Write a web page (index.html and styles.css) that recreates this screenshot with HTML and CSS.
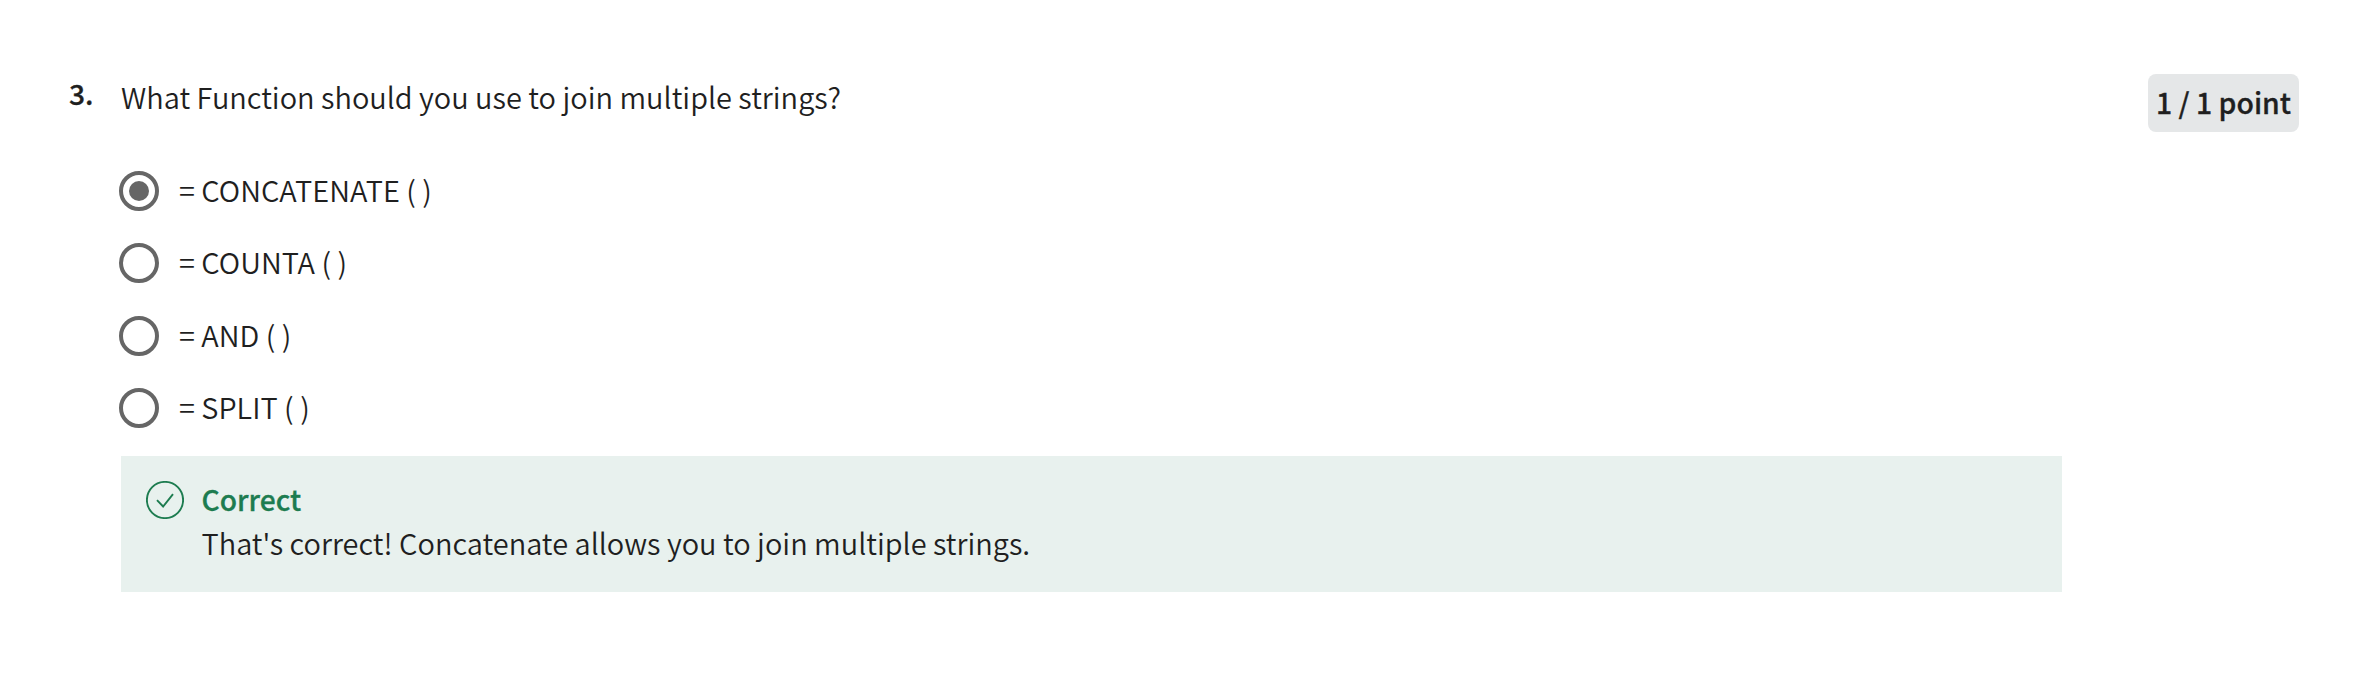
FILE: index.html
```
<!DOCTYPE html>
<html lang="en">
<head>
<meta charset="utf-8">
<title>Quiz question</title>
<link rel="stylesheet" href="styles.css">
</head>
<body>
<main class="question">
  <div class="number">3.</div>
  <section class="content">
    <p class="prompt"><span>What Function should you use to join multiple strings?</span></p>
    <div class="options">
      <div class="option"><span class="radio checked"></span><span class="label">= CONCATENATE ( )</span></div>
      <div class="option"><span class="radio"></span><span class="label">= COUNTA ( )</span></div>
      <div class="option"><span class="radio"></span><span class="label">= AND ( )</span></div>
      <div class="option"><span class="radio"></span><span class="label">= SPLIT ( )</span></div>
    </div>
    <div class="feedback">
      <svg class="check" viewBox="0 0 38 38"><circle cx="19" cy="19" r="18.1"/><path d="M11 19.2l6.1 6.3L27 13.2"/></svg>
      <div class="message">
        <div class="verdict">Correct</div>
        <div class="detail">That's correct! Concatenate allows you to join multiple strings.</div>
      </div>
    </div>
  </section>
  <div class="points">1 / 1 point</div>
</main>
</body>
</html>
```
FILE: styles.css
```
* { box-sizing: border-box; }
body {
  margin: 0;
  background: #fff;
  color: #1f1f1f;
  font-family: "Noto Sans CJK SC", "Open Sans", sans-serif;
  font-weight: 350;
  font-size: 28.96px;
  line-height: 44px;
}
.question {
  display: flex;
  align-items: flex-start;
  padding: 74px 64px 0 69px;
}
.number {
  width: 52px;
  font-weight: 500;
  font-size: 28.2px;
  line-height: 38px;
  -webkit-text-stroke: 0.3px currentColor;
}
.content { width: 1941px; }
.prompt { margin: 0; }
.options {
  display: grid;
  grid-template-rows: repeat(4, 40px);
  row-gap: 32.33px;
  margin: 53px 0 28px -2px;
}
.option {
  display: flex;
  align-items: center;
  gap: 20px;
}
.radio {
  display: grid;
  place-items: center;
  width: 40px;
  height: 40px;
  border: 4px solid #666;
  border-radius: 50%;
}
.checked::after {
  content: "";
  width: 20px;
  height: 20px;
  border-radius: 50%;
  background: #666;
}
.label { line-height: 40px; padding-bottom: 4px; }
.feedback {
  display: flex;
  gap: 17.5px;
  height: 136px;
  padding: 21px 25px;
  background: #e8f1ee;
}
.check {
  width: 38px;
  height: 38px;
  margin-top: 4px;
  fill: none;
  stroke: #1d7c50;
  stroke-width: 1.9;
}
.verdict {
  color: #1d7c50;
  font-weight: 500;
  font-size: 28.2px;
  line-height: 43px;
  -webkit-text-stroke: 0.3px currentColor;
}
.points {
  width: 151px;
  height: 58px;
  margin-left: auto;
  border-radius: 8px;
  background: #e5e7e8;
  font-weight: 500;
  font-size: 28.4px;
  line-height: 55px;
  text-align: center;
  white-space: nowrap;
  -webkit-text-stroke: 0.3px currentColor;
}
```
